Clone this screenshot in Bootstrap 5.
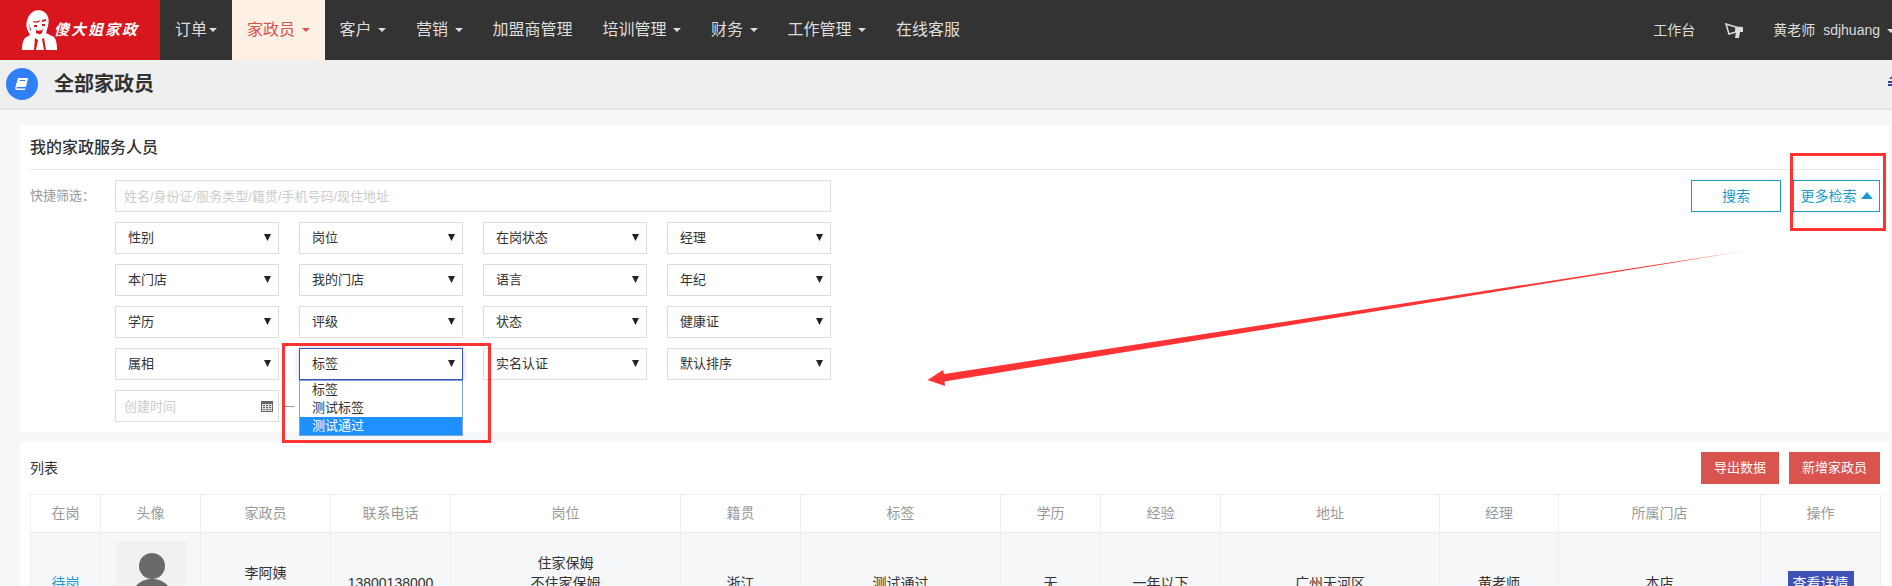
<!DOCTYPE html>
<html lang="en">

<head>
  <meta charset="UTF-8" />
  <title>全部家政员</title>
  <link href="https://cdn.jsdelivr.net/npm/bootstrap@5.3.0/dist/css/bootstrap.min.css" rel="stylesheet" />
  <style>
    html, body { height: 586px; overflow: hidden; }
    body { font-family: "Liberation Sans", "Noto Sans CJK SC", sans-serif; font-size: 13px; color: #333; background: #f6f7f9; position: relative; }

    /* top bar */
    .top-bar { height: 60px; background: #333; flex-wrap: nowrap; overflow: hidden; }
    .brand-box { width: 160px; height: 60px; background: #d7161e; flex: none; }
    .brand-box svg { margin-left: 22px; margin-top: 10px; flex: none; }
    .brand-text { color: #fff; font-size: 15px; font-weight: 700; font-style: italic; letter-spacing: 2px; margin-left: -4px; margin-top: 19px; white-space: nowrap; }
    .main-menu .nav-link { color: #ddd; font-size: 16px; line-height: 60px; padding: 0 15px; white-space: nowrap; }
    .main-menu .nav-link.dropdown-toggle::after { margin-left: 6.5px; vertical-align: 3px; border-top-width: 4px; border-left-width: 4px; border-right-width: 4px; border-bottom: 0; }
    .main-menu .first-item.dropdown-toggle::after { margin-left: 2px; }
    .main-menu .nav-link.first-item { padding-right: 15px; width: 72px; }
    .main-menu .nav-link.current { background: #fff0e6; color: #d9534f; }
    .top-right { color: #ddd; font-size: 14px; margin-right: -3px; flex: none; }
    .top-right .dropdown-toggle::after { margin-left: 7px; vertical-align: 2px; border-top-width: 4px; border-left-width: 4px; border-right-width: 4px; border-bottom: 0; }
    .horn-icon { margin: 0 29px 0 30px; }

    /* page title */
    .title-bar { height: 50px; background: #efefef; border-bottom: 2px solid #e4e4e4; padding-left: 6px; overflow: hidden; }
    .title-circle { width: 32px; height: 32px; background: #2f80f8; border-radius: 50%; flex: none; }
    .title-bar h1 { font-size: 20px; font-weight: 700; color: #333; margin: 0 0 0 16px; }
    .title-bar svg.corner-icon { margin-right: -8px; margin-top: -8px; }

    /* panels */
    .page-wrap { padding: 15px 2px 0 20px; }
    .white-panel { background: #fff; padding: 0 10px 10px; margin-bottom: 10px; }
    .panel-head { height: 45px; line-height: 45px; font-size: 16px; font-weight: 500; color: #333; border-bottom: 1px solid #e8e8e8; margin-bottom: 10px; }
    .quick-label { width: 85px; flex: none; line-height: 32px; color: #999; }
    .filter-grid { width: 716px; flex: none; display: grid; grid-template-columns: repeat(4, 164px); gap: 10px 20px; }
    .filter-grid .form-control, .filter-grid .form-select { height: 32px; border: 1px solid #ddd; border-radius: 0; font-size: 13px; color: #333; min-height: 0; box-shadow: none; }
    .filter-grid .form-control { padding: 0 8px; }
    .filter-grid .form-control::placeholder { color: #ccc; }
    .filter-grid .form-select { padding: 0 24px 0 12px; background-size: 7px 7px; background-position: right 7px top 11px; background-image: url("data:image/svg+xml,%3csvg xmlns='http://www.w3.org/2000/svg' viewBox='0 0 7 7'%3e%3cpath fill='%23222' d='M0 0h7L3.5 7z'/%3e%3c/svg%3e"); }
    .filter-grid .form-select.opened { border-color: #3f51b5; box-shadow: 0 0 5px rgba(63, 81, 181, .35); }
    .search-wide { grid-column: span 4; }
    .date-span { grid-column: span 2; }
    .date-span .form-control { width: 164px; flex: none; }
    .date-dash { width: 10px; height: 1px; background: #999; margin: 0 5px; flex: none; }
    .cal-icon { position: absolute; left: 146px; top: 11px; }
    .open-list { position: absolute; top: 32px; left: 0; right: 0; z-index: 5; background: #fff; border: 1px solid #7ba6dd; font-size: 13px; line-height: 18px; }
    .open-list div { padding: 0 12px; height: 18px; }
    .open-list div.picked { background: #1e90ff; color: #fff; }
    .btn-outline-teal { height: 32px; border: 1px solid #1a9bcb; border-radius: 0; color: #1a9bcb; font-size: 14px; background: #fff; padding: 0; }
    .btn-search { width: 90px; }
    .btn-more { width: 87px; margin-left: 12px; }
    .up-tri { display: inline-block; border-left: 6px solid transparent; border-right: 6px solid transparent; border-bottom: 7px solid #1a9bcb; margin-left: 4px; vertical-align: 2px; }

    .list-title { font-size: 14px; color: #333; }
    .list-head { padding: 10px 0; }
    .btn-red { height: 32px; background: #d9534f; color: #fff; border: 0; border-radius: 0; font-size: 13px; padding: 0; }
    .btn-export { width: 78px; margin-right: 10px; }
    .btn-add { width: 91px; }

    .staff-table { table-layout: fixed; width: 1850px; margin: 0; font-size: 14px; --bs-table-border-color: #eee; }
    .staff-table th { height: 38px; padding: 0; font-weight: 400; color: #999; text-align: center; vertical-align: middle; }
    .staff-table td { padding: 9px 0; text-align: center; vertical-align: middle; background: #f6f7f9; color: #333; line-height: 20px; }
    .wait-link { color: #1a9bcb; text-decoration: none; }
    .avatar-box { width: 70px; height: 82px; background: #f1f1f1; margin: 0 auto; }
    .btn-detail { width: 66px; height: 24px; line-height: 24px; background: #3f51b5; color: #fff; border: 0; border-radius: 0; font-size: 14px; padding: 0; }
    .staff-table td.raised-cell { padding-bottom: 30px; }

    /* annotation drawn on top of the screenshot */
    .mark-layer { position: absolute; left: 0; top: 0; z-index: 10; pointer-events: none; }
  </style>
</head>

<body>
  <nav class="top-bar d-flex align-items-center">
    <div class="brand-box d-flex">
      <svg width="36" height="41" viewBox="0 0 36 41">
        <path fill="#fff" d="M12 1c5-2 11 0 13 4 2 3 2 7 1 11l-2 7 8 4c2 2 3 7 3 13H0c0-6 1-10 3-12l5-3-2-4C3 16 4 6 12 1z" />
        <path fill="#d7161e" d="M11 11c3 1 5 0 7-1l-1 2c-2 1-4 1-6 0zM20 10l4-1v2l-4 1zM12 15h3v2h-3zM20 14h3v2h-3zM14 20c2 1 5 1 7-1l-1 4c-2 2-4 1-6 0zM7 13l2 7-1 1zM13 28l3 2-2 10h-2zM20 29l2-1 2 12h-2z" />
      </svg>
      <span class="brand-text">傻大姐家政</span>
    </div>
    <ul class="nav main-menu flex-nowrap">
      <li class="nav-item"><a class="nav-link dropdown-toggle first-item" href="#">订单</a></li>
      <li class="nav-item"><a class="nav-link dropdown-toggle current" href="#">家政员</a></li>
      <li class="nav-item"><a class="nav-link dropdown-toggle" href="#">客户</a></li>
      <li class="nav-item"><a class="nav-link dropdown-toggle" href="#">营销</a></li>
      <li class="nav-item"><a class="nav-link" href="#">加盟商管理</a></li>
      <li class="nav-item"><a class="nav-link dropdown-toggle" href="#">培训管理</a></li>
      <li class="nav-item"><a class="nav-link dropdown-toggle" href="#">财务</a></li>
      <li class="nav-item"><a class="nav-link dropdown-toggle" href="#">工作管理</a></li>
      <li class="nav-item"><a class="nav-link" href="#">在线客服</a></li>
    </ul>
    <div class="top-right ms-auto d-flex align-items-center">
      <span>工作台</span>
      <svg class="horn-icon" width="19" height="15" viewBox="0 0 19 15">
        <path fill="none" stroke="#ddd" stroke-width="1.5" d="M1 1l10 3v5L4 11z" />
        <path fill="#ddd" d="M11 3.500l7 .5v5h-3l-1 6h-4l1-6h-1z" />
      </svg>
      <span>黄老师</span>
      <span class="dropdown-toggle ms-2">sdjhuang</span>
    </div>
  </nav>

  <div class="title-bar d-flex align-items-center">
    <div class="title-circle d-flex align-items-center justify-content-center">
      <svg width="14" height="14" viewBox="0 0 14 14">
        <path fill="#fff" d="M3 1h10l-2 9H2.500C1.500 10 1 11 2 11.500h8.500L10 13H2C.5 13 0 12 .3 10.500z" />
        <path fill="#2f80f8" d="M5 3h5.500l-.2 1H4.800z" />
      </svg>
    </div>
    <h1>全部家政员</h1>
    <svg class="corner-icon ms-auto" width="12" height="12" viewBox="0 0 12 12">
      <path fill="#3a3a9a" d="M6 0l5 5H9L6 2.500 3 5H1zM0 7h12v2H0zM0 10h12v2H0z" />
    </svg>
  </div>

  <div class="page-wrap">
    <section class="white-panel">
      <div class="panel-head">我的家政服务人员</div>
      <div class="d-flex">
        <div class="quick-label">快捷筛选：</div>
        <div class="filter-grid">
          <input class="form-control search-wide" type="text" placeholder="姓名/身份证/服务类型/籍贯/手机号码/现住地址" />
          <select class="form-select"><option>性别</option></select>
          <select class="form-select"><option>岗位</option></select>
          <select class="form-select"><option>在岗状态</option></select>
          <select class="form-select"><option>经理</option></select>
          <select class="form-select"><option>本门店</option></select>
          <select class="form-select"><option>我的门店</option></select>
          <select class="form-select"><option>语言</option></select>
          <select class="form-select"><option>年纪</option></select>
          <select class="form-select"><option>学历</option></select>
          <select class="form-select"><option>评级</option></select>
          <select class="form-select"><option>状态</option></select>
          <select class="form-select"><option>健康证</option></select>
          <select class="form-select"><option>属相</option></select>
          <div class="position-relative">
            <select class="form-select opened w-100"><option>标签</option></select>
            <div class="open-list">
              <div>标签</div>
              <div>测试标签</div>
              <div class="picked">测试通过</div>
            </div>
          </div>
          <select class="form-select"><option>实名认证</option></select>
          <select class="form-select"><option>默认排序</option></select>
          <div class="date-span d-flex align-items-center">
            <div class="position-relative">
              <input class="form-control" type="text" placeholder="创建时间" />
              <svg class="cal-icon" width="12" height="11" viewBox="0 0 12 11">
                <path fill="#666" d="M0 0h12v11H0z" />
                <path fill="#ddd" d="M1 3h10v7H1z" />
                <path fill="#666" d="M2 4h2v1H2zM5 4h2v1H5zM8 4h2v1H8zM2 6h2v1H2zM5 6h2v1H5zM8 6h2v1H8zM2 8h2v1H2zM5 8h2v1H5zM8 8h2v1H8z" />
              </svg>
            </div>
            <div class="date-dash"></div>
            <input class="form-control" type="text" />
          </div>
        </div>
        <div class="ms-auto d-flex align-items-start">
          <button type="button" class="btn btn-outline-teal btn-search">搜索</button>
          <button type="button" class="btn btn-outline-teal btn-more">更多检索<span class="up-tri"></span></button>
        </div>
      </div>
    </section>

    <section class="white-panel">
      <div class="list-head d-flex align-items-center">
        <div class="list-title">列表</div>
        <button type="button" class="btn btn-red btn-export ms-auto">导出数据</button>
        <button type="button" class="btn btn-red btn-add">新增家政员</button>
      </div>
      <table class="table table-bordered staff-table">
        <colgroup>
          <col style="width:70px" /><col style="width:100px" /><col style="width:130px" /><col style="width:120px" />
          <col style="width:230px" /><col style="width:120px" /><col style="width:200px" /><col style="width:100px" />
          <col style="width:120px" /><col style="width:219px" /><col style="width:119px" /><col style="width:202px" />
          <col style="width:120px" />
        </colgroup>
        <thead>
          <tr>
            <th>在岗</th><th>头像</th><th>家政员</th><th>联系电话</th><th>岗位</th><th>籍贯</th><th>标签</th>
            <th>学历</th><th>经验</th><th>地址</th><th>经理</th><th>所属门店</th><th>操作</th>
          </tr>
        </thead>
        <tbody>
          <tr>
            <td><a class="wait-link" href="#">待岗</a></td>
            <td>
              <div class="avatar-box">
                <svg width="70" height="82" viewBox="0 0 70 82">
                  <circle cx="36" cy="24" r="13" fill="#696969" />
                  <path fill="#696969" d="M15 60c0-15 9-23 21-23s21 8 21 23z" />
                </svg>
              </div>
            </td>
            <td class="raised-cell">李阿姨</td>
            <td>13800138000</td>
            <td class="raised-cell">住家保姆<br />不住家保姆</td>
            <td>浙江</td>
            <td>测试通过</td>
            <td>无</td>
            <td>一年以下</td>
            <td>广州天河区</td>
            <td>黄老师</td>
            <td>本店</td>
            <td><button type="button" class="btn btn-detail">查看详情</button></td>
          </tr>
        </tbody>
      </table>
    </section>
  </div>

  <svg class="mark-layer" width="1892" height="586" viewBox="0 0 1892 586">
    <defs>
      <linearGradient id="arrowFade" gradientUnits="userSpaceOnUse" x1="1764" y1="248" x2="1670" y2="263">
        <stop offset="0" stop-color="#ff3333" stop-opacity="0" />
        <stop offset="1" stop-color="#ff3333" />
      </linearGradient>
    </defs>
    <rect x="1791.500" y="154.500" width="93" height="75" fill="none" stroke="#ff3333" stroke-width="3" />
    <rect x="283.500" y="344.500" width="206" height="97" fill="none" stroke="#ff3333" stroke-width="3" />
    <path fill="url(#arrowFade)" d="M1764 248L944 374 943 370 927.500 380 945 386 944.500 381.500z" />
  </svg>

  <script src="https://cdn.jsdelivr.net/npm/bootstrap@5.3.0/dist/js/bootstrap.bundle.min.js"></script>
</body>

</html>
